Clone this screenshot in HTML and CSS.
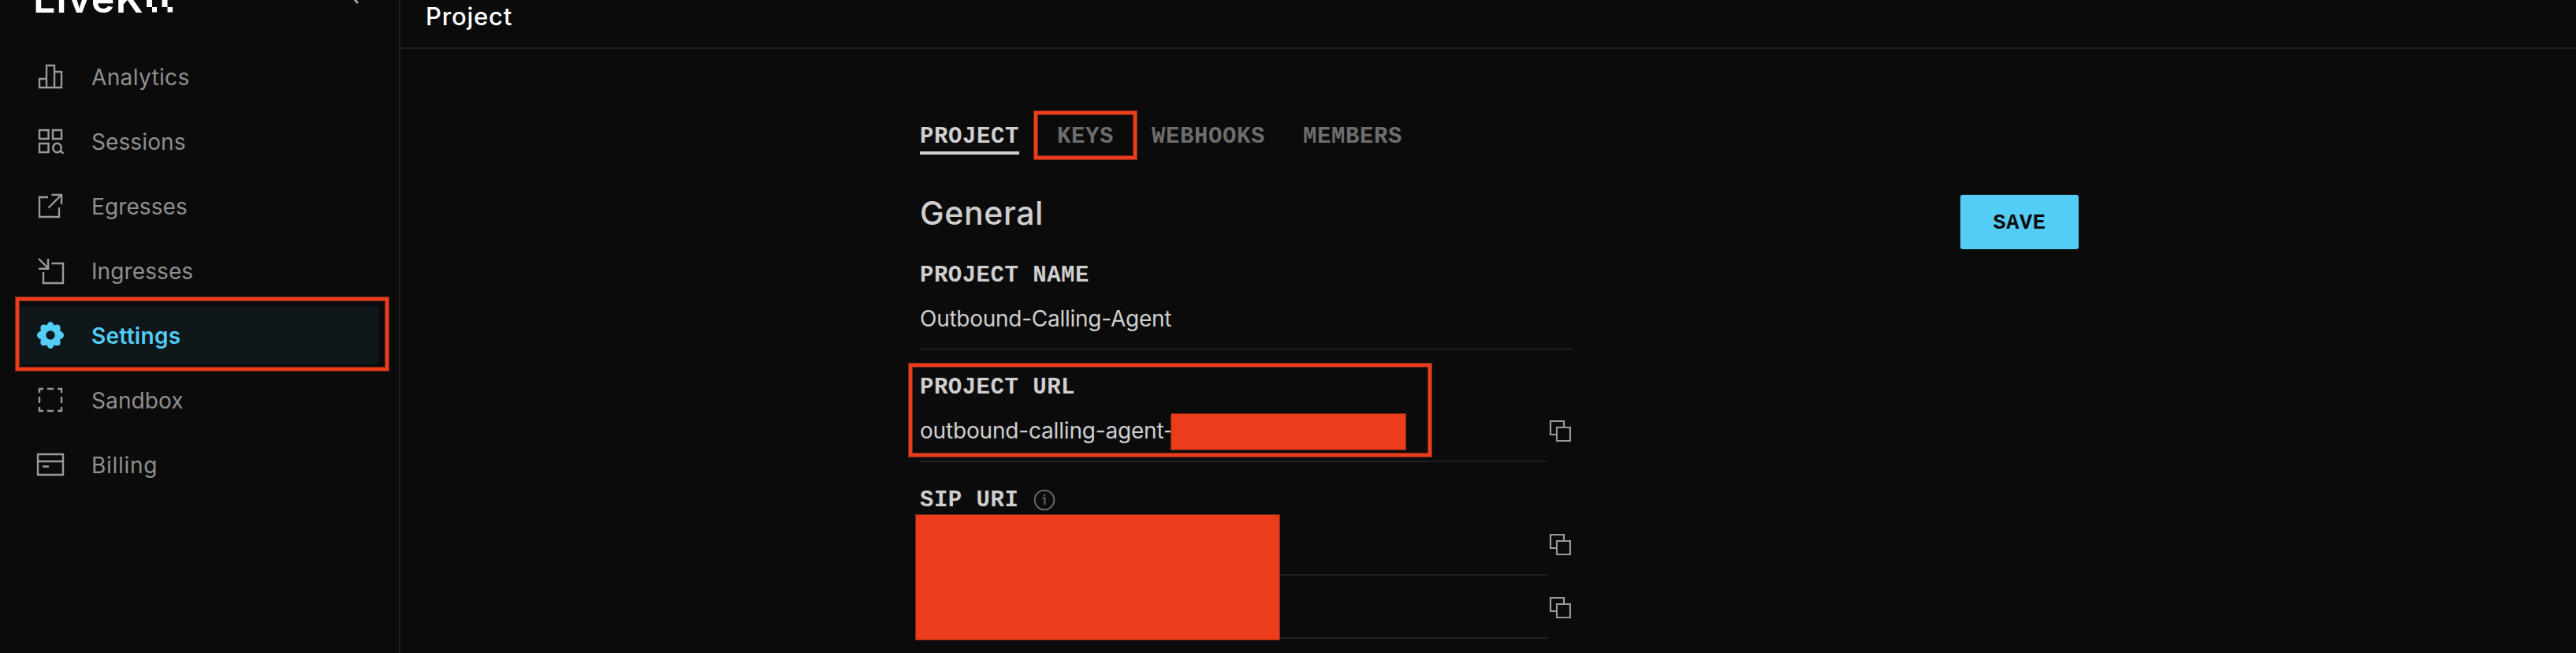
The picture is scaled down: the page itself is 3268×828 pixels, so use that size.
FILE: index.html
```html
<!DOCTYPE html>
<html lang="en">
<head>
<meta charset="utf-8">
<title>Project settings</title>
<link rel="stylesheet" href="styles.css">
</head>
<body>
<div class="app">
  <aside class="sidebar">
    <header class="brand">
      <div class="logo"><span class="logo-text">LiveK</span><svg class="logo-pixels" width="34" height="16" viewBox="0 0 34 16" fill="#fff"><path d="M0 0h7v9H0zM7 9h6v6.500H7zM19.500 0h7v9h-7zM26.500 9h6.500v6.500h-6.500z"/></svg></div>
      <svg class="collapse" width="14" height="8" viewBox="0 0 14 8"><path d="M4 -5L12 4" stroke="#b5b5b5" stroke-width="2.600" fill="none"/></svg>
    </header>
    <nav class="nav">
      <a class="item"><svg class="icon" viewBox="0 0 36 36"><path d="M4 21h9v11H4zM13 4h10v28H13zM23 12h9v20h-9z"/></svg><span class="l-analytics">Analytics</span></a>
      <a class="item"><svg class="icon" viewBox="0 0 36 36"><path d="M4 4h11.500v11H4zM21 4h11v11H21zM4 21h11.500v11H4z"/><ellipse cx="26.500" cy="26.500" rx="5.300" ry="5.800"/><path d="M29.500 29.500l5 4"/></svg><span class="l-sessions">Sessions</span></a>
      <a class="item"><svg class="icon" viewBox="0 0 36 36"><path d="M15 7H4v25h25V20M15.500 20.500L32 4M19.500 4H32v12"/></svg><span class="l-egresses">Egresses</span></a>
      <a class="item"><svg class="icon" viewBox="0 0 36 36"><path d="M19.500 9H34v25H9V20M3 3l12.500 12.500M15 3v12.700H3"/></svg><span class="l-ingresses">Ingresses</span></a>
      <a class="item active"><svg class="icon" viewBox="0 0 36 36"><g fill="#53cdf6" stroke="none"><path fill-rule="evenodd" d="M18 1Q21 1 22.500 5.500Q27 3.500 29.500 5.500Q31.500 8.500 30 12.500Q35 14.500 35 18Q35 21.500 30 23.500Q31.500 28 29.500 30.500Q27 32 22.500 30.500Q21 35 18 35Q15 35 13.500 30.500Q9 32 6.500 30.500Q4.500 28 6 23.500Q1 21.500 1 18Q1 14.500 6 12.500Q4.500 8.500 6.500 5.500Q9 3.500 13.500 5.500Q15 1 18 1ZM18 12.300A5.700 5.700 0 1 0 18 23.700A5.700 5.700 0 1 0 18 12.300Z"/></g></svg><span class="l-settings">Settings</span></a>
      <a class="item"><svg class="icon" viewBox="0 0 36 36"><path d="M4 9V4h5M14 4h8M27 4h5v5M32 14v8M32 27v5h-5M22 32h-8M9 32H4v-5M4 22v-8"/></svg><span class="l-sandbox">Sandbox</span></a>
      <a class="item"><svg class="icon" viewBox="0 0 36 36"><path d="M2 5h32v26H2zM2 14h32M8 20.500h8"/></svg><span class="l-billing">Billing</span></a>
    </nav>
    <div class="mark mark-settings"></div>
  </aside>
  <main class="main">
    <header class="topbar"><h1>Project</h1></header>
    <section class="content">
      <div class="tabs">
        <a class="tab current">PROJECT</a><a class="tab">KEYS</a><a class="tab">WEBHOOKS</a><a class="tab">MEMBERS</a>
        <div class="mark mark-keys"></div>
      </div>
      <div class="heading"><h2>General</h2><button class="save">SAVE</button></div>
      <div class="form">
        <div class="field name">
          <label>PROJECT NAME</label>
          <div class="row wide"><span class="value v-name">Outbound-Calling-Agent</span></div>
        </div>
        <div class="field url">
          <label>PROJECT URL</label>
          <div class="row"><div class="line"><span class="value v-url">outbound-calling-agent-</span></div><svg class="copy" viewBox="0 0 28 28"><path d="M10 19H2V2h17v8M10 10h17v17H10z"/></svg></div>
          <div class="mark mark-url"></div>
          <div class="redact redact-url"></div>
        </div>
        <div class="field sip">
          <label>SIP URI <svg class="info" viewBox="0 0 28 28"><circle cx="14" cy="14" r="12.300"/><path d="M11.500 11.500h3V20M14 6.800v2.400"/></svg></label>
          <div class="row"><div class="line"></div><svg class="copy" viewBox="0 0 28 28"><path d="M10 19H2V2h17v8M10 10h17v17H10z"/></svg></div>
          <div class="row second"><div class="line"></div><svg class="copy" viewBox="0 0 28 28"><path d="M10 19H2V2h17v8M10 10h17v17H10z"/></svg></div>
          <div class="redact redact-sip"></div>
        </div>
      </div>
    </section>
  </main>
</div>
</body>
</html>
```
FILE: styles.css
```css
* { box-sizing: border-box; }
body { margin: 0; background: #0b0b0b; color: #cfcfcf; font-family: Inter, "Liberation Sans", sans-serif; }
h1, h2 { margin: 0; font-weight: 500; }
.app { display: flex; width: 3268px; height: 828px; overflow: hidden; }

.sidebar { position: relative; width: 508px; border-right: 2px solid #1f1f1f; padding: 0 26px 0 24px; flex: none; }
.brand { height: 60px; display: flex; justify-content: space-between; align-items: flex-start; padding: 0 24px 0 18px; overflow: hidden; }
.logo { display: flex; color: #fff; align-items: flex-start; height: 24px; }
.logo-text { width: 144px; font-size: 50px; font-weight: 600; line-height: 60px; margin-top: -32px; letter-spacing: 1.300px; }
.collapse { flex: none; }
.nav { display: flex; flex-direction: column; gap: 8px; }
.item { display: flex; align-items: center; height: 74px; padding-left: 22px; gap: 34px; border-radius: 4px; font-size: 28px; line-height: 36px; color: #8f8f8f; letter-spacing: .1px; }
.item span { padding-top: 2px; }
.active { background: #0e1719; color: #53cdf6; font-weight: 600; }
.l-analytics { letter-spacing: .35px; }
.l-billing { letter-spacing: .7px; }
.active .l-settings { letter-spacing: .3px; }
.icon { width: 36px; height: 36px; flex: none; fill: none; stroke: #9a9a9a; stroke-width: 2.400; }

.main { flex: 1; }
.topbar { height: 62px; border-bottom: 2px solid #1f1f1f; padding-left: 32px; overflow: hidden; }
.topbar h1 { font-size: 31px; line-height: 42px; color: #fff; letter-spacing: .8px; }
.content { margin-left: 659px; width: 1470px; }
.tabs { position: relative; display: flex; gap: 48px; padding-top: 92px; height: 134px; }
.tab, label, .save { font-family: "Liberation Mono", monospace; font-weight: 700; }
.tab { font-size: 29px; line-height: 40px; height: 42px; letter-spacing: .6px; color: #6d6d6d; }
.current { color: #d0d0d0; border-bottom: 4px solid #d0d0d0; }
.heading { display: flex; justify-content: space-between; align-items: flex-start; height: 120px; padding-top: 51px; }
.heading h2 { font-size: 41px; line-height: 48px; margin-top: -1px; letter-spacing: .6px; }
.save { width: 150px; height: 69px; border: 0; border-radius: 3px; padding: 2px 0 0; background: #53cdf6; color: #0b0b0b; font-size: 27px; letter-spacing: .5px; }

.form { width: 828px; }
.field { position: relative; }
label { display: flex; align-items: center; font-size: 29px; line-height: 38px; height: 36px; padding-top: 2px; letter-spacing: .5px; white-space: pre; }
.name { padding-top: 15px; height: 128px; }
.url { padding-top: 29px; height: 142px; }
.sip { padding-top: 30px; }
.row { display: flex; justify-content: space-between; align-items: center; height: 77px; }
.line { width: 796px; height: 77px; border-bottom: 2px solid #1f1f1f; }
.wide { border-bottom: 2px solid #1f1f1f; }
.value { font-size: 28px; line-height: 36px; display: block; }
.v-name { letter-spacing: -.26px; margin-top: -2px; }
.v-url { letter-spacing: -.18px; }
.line .value { padding-top: 19px; }
.sip .row { height: 78px; align-items: flex-end; }
.second.row { height: 80px; }
.copy { width: 28px; height: 28px; flex: none; margin: -4px 2px 0 0; fill: none; stroke: #9a9a9a; stroke-width: 2.200; }
.sip .copy { margin: 0 2px 26px 0; }
.info { width: 28px; height: 28px; margin: -2px 0 0 1px; fill: none; stroke: #666; stroke-width: 2; }

.mark { position: absolute; border: 4px solid #ec3c1b; box-shadow: 0 0 0 1px #7b2918, inset 0 0 0 1px #7b2918; }
.redact { position: absolute; background: #ec3c1b; border: 1px solid #7b2918; }
.mark-settings { left: 20px; top: 377px; width: 473px; height: 93px; }
.mark-keys { left: 145px; top: 79px; width: 130px; height: 61px; }
.mark-url { left: -14px; top: 17px; width: 663px; height: 118px; }
.redact-url { left: 318px; top: 80px; width: 299px; height: 47px; }
.redact-sip { left: -6px; top: 66px; width: 463px; height: 160px; }
```
